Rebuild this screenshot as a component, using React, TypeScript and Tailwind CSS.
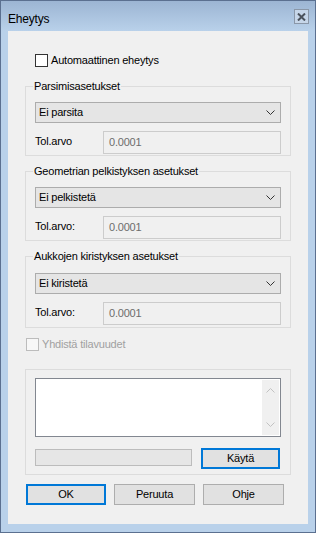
import type { ReactNode } from "react";

const font = { fontFamily: '"Liberation Sans", Arial, sans-serif' };

function Chevron({ color = "#333333" }: { color?: string }) {
  return (
    <svg width="9" height="6" viewBox="0 0 9 6" fill="none">
      <path d="M0.5 0.5 L4.5 4.5 L8.5 0.5" stroke={color} strokeWidth="1" />
    </svg>
  );
}

function Group({
  legend,
  top,
  height,
  children,
}: {
  legend?: string;
  top: string;
  height: string;
  children: ReactNode;
}) {
  return (
    <div
      className={`relative w-[266px] border border-[#dcdcdc] ${top} ${height} px-[9px]`}
    >
      {legend ? (
        <span className="absolute left-[7px] top-[-8px] bg-[#f0f0f0] px-[1px] leading-[14px] text-black">
          {legend}
        </span>
      ) : null}
      {children}
    </div>
  );
}

function Combo({ value }: { value: string }) {
  return (
    <div className="flex h-[21px] w-[246px] items-center justify-between border border-[#acacac] bg-[#e5e5e5] pl-[3px] pr-[5px]">
      <span className="leading-none text-black">{value}</span>
      <Chevron />
    </div>
  );
}

function TolRow({ label }: { label: string }) {
  return (
    <div className="mt-[8px] flex items-start">
      <span className="w-[68px] pt-[3px] leading-[14px] text-black">{label}</span>
      <div className="flex h-[23px] w-[178px] items-center border border-[#cccccc] bg-[#f0f0f0] pl-[5px] text-[#6d6d6d]">
        0.0001
      </div>
    </div>
  );
}

function Button({ label, isDefault, width }: { label: string; isDefault?: boolean; width: string }) {
  return (
    <div
      className={`flex h-[21px] ${width} items-center justify-center bg-[#e1e1e1] text-black ${
        isDefault ? "border-2 border-[#0078d7]" : "border border-[#adadad]"
      }`}
    >
      {label}
    </div>
  );
}

export default function App() {
  return (
    <div
      className="flex h-[533px] w-[316px] flex-col border border-[#5b7090] bg-[#b9d1ea] text-[11px] tracking-[-0.2px]"
      style={font}
    >
      <div className="flex h-[30px] items-start justify-between bg-gradient-to-b from-[#9cb5d3] to-[#b9d1ea] pl-[7px] pr-[6px] pt-[8px]">
        <span className="pt-[3px] text-[12px] leading-[14px] text-black">Eheytys</span>
        <div className="flex h-[15px] w-[15px] items-center justify-center border border-[#8a97a8] bg-[#c6d6e9]">
          <svg width="9" height="8" viewBox="0 0 9 8">
            <path d="M1 0.5 L8 7.5 M8 0.5 L1 7.5" stroke="#4b525c" strokeWidth="2" />
          </svg>
        </div>
      </div>

      <div className="mx-[7px] flex h-[493px] flex-col bg-[#f0f0f0] pl-[17px]">
        <label className="mt-[23px] flex h-[13px] items-center pl-[10px]">
          <span className="h-[13px] w-[13px] border border-[#333333] bg-white" />
          <span className="ml-[3px] leading-none text-black">Automaattinen eheytys</span>
        </label>

        <Group legend="Parsimisasetukset" top="mt-[19px]" height="h-[70px]">
          <div className="pt-[15px]">
            <Combo value="Ei parsita" />
            <TolRow label="Tol.arvo" />
          </div>
        </Group>

        <Group legend="Geometrian pelkistyksen asetukset" top="mt-[15px]" height="h-[70px]">
          <div className="pt-[15px]">
            <Combo value="Ei pelkistetä" />
            <TolRow label="Tol.arvo:" />
          </div>
        </Group>

        <Group legend="Aukkojen kiristyksen asetukset" top="mt-[15px]" height="h-[72px]">
          <div className="pt-[16px]">
            <Combo value="Ei kiristetä" />
            <TolRow label="Tol.arvo:" />
          </div>
        </Group>

        <label className="mt-[10px] flex h-[13px] items-center pl-[1px]">
          <span className="h-[13px] w-[13px] border border-[#bcbcbc] bg-[#f7f7f7]" />
          <span className="ml-[3px] leading-none text-[#a0a0a0]">Yhdistä tilavuudet</span>
        </label>

        <Group top="mt-[18px]" height="h-[106px]">
          <div className="pt-[8px]">
            <div className="flex h-[59px] w-[246px] justify-end border border-[#828790] bg-white p-[1px]">
              <div className="flex w-[17px] flex-col items-center justify-between bg-[#f0f0f0] py-[7px]">
                <span className="rotate-180">
                  <Chevron color="#c2c2c2" />
                </span>
                <Chevron color="#c2c2c2" />
              </div>
            </div>
            <div className="mt-[11px] flex items-start justify-between pr-[1px]">
              <div className="mt-[1px] h-[17px] w-[157px] border border-[#bcbcbc] bg-[#e6e6e6]" />
              <Button label="Käytä" isDefault width="w-[79px] h-[18px]" />
            </div>
          </div>
        </Group>

        <div className="mt-[9px] flex gap-[8px] pl-[1px]">
          <Button label="OK" isDefault width="w-[80px]" />
          <Button label="Peruuta" width="w-[81px]" />
          <Button label="Ohje" width="w-[81px]" />
        </div>
      </div>
    </div>
  );
}
